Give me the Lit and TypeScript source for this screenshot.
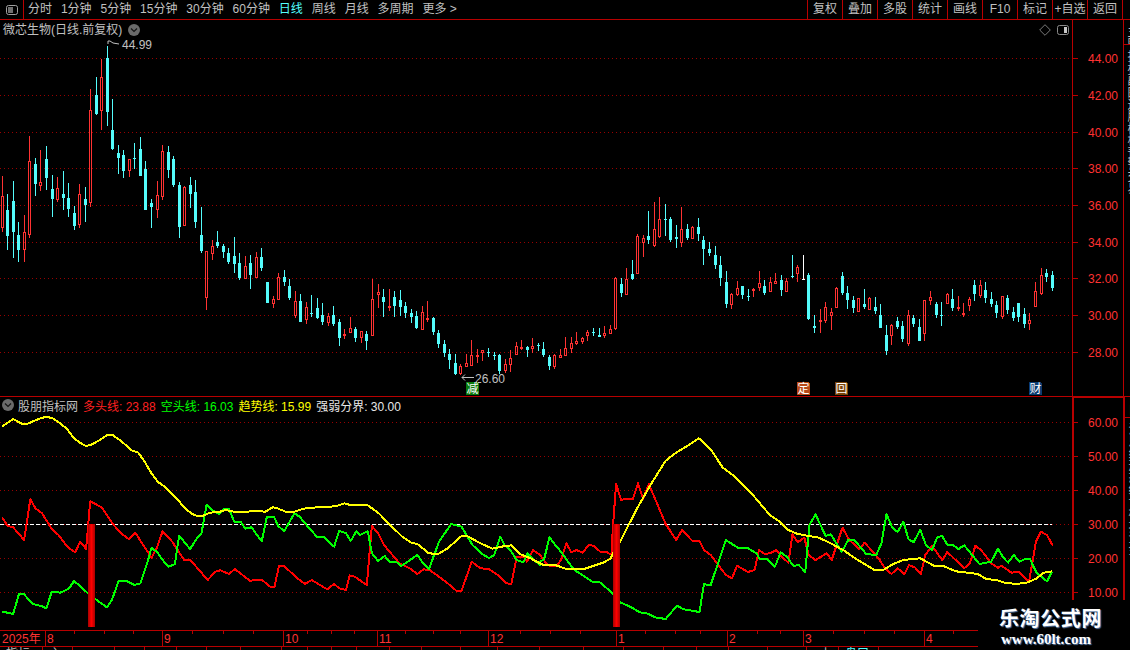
import { LitElement, css, html, svg } from 'lit';
import { customElement } from 'lit/decorators.js';

// hi, body top, body bottom, lo (page px), kind: 1 up, 0 down, 2 flat
type Candle = [number, number, number, number, number];

const CANDLES: Candle[] = [
  [176,196,228,232,1],[194,210,236,250,0],[181,201,232,258,0],[222,235,250,262,0],[215,232,250,262,1],
  [136,161,235,238,1],[158,164,184,196,0],[150,182,186,191,1],[146,159,178,190,0],[175,189,199,217,0],
  [177,188,200,202,1],[171,194,198,210,0],[183,198,209,217,0],[206,213,226,230,0],[184,194,225,228,1],
  [187,199,205,222,0],[89,110,203,207,1],[77,95,114,115,0],[59,77,111,130,1],[46,58,112,126,0],
  [99,130,149,150,0],[145,153,158,174,0],[150,155,171,178,0],[159,159,171,177,1],[143,158,159,169,0],
  [137,149,176,176,0],[161,169,210,210,0],[199,203,207,228,0],[181,195,210,218,1],[145,151,197,200,1],
  [146,152,170,178,0],[156,159,185,187,0],[182,185,227,238,0],[186,187,226,226,1],[177,185,194,208,0],
  [180,192,222,228,0],[207,235,251,253,0],[251,251,298,310,1],[240,246,254,260,1],[231,242,246,248,0],
  [244,246,252,258,0],[248,253,262,264,0],[237,256,264,273,0],[253,263,278,280,0],[256,266,279,279,1],
  [255,263,275,289,0],[252,257,278,278,1],[248,257,268,271,0],[282,282,303,303,0],[296,299,304,308,1],
  [273,277,300,300,1],[270,277,282,286,0],[279,286,298,300,0],[291,301,316,318,1],[294,301,322,322,0],
  [302,307,320,324,1],[295,313,314,317,0],[298,308,318,319,0],[303,315,322,325,0],[313,316,323,326,1],
  [306,315,324,326,0],[319,322,338,346,0],[329,334,336,339,1],[317,328,333,333,1],[327,329,338,342,0],
  [331,331,338,343,1],[331,334,341,350,0],[279,299,336,336,1],[284,292,295,308,1],[289,297,302,317,0],
  [289,306,307,311,1],[291,297,306,317,0],[290,300,307,316,0],[302,306,313,318,0],[309,313,317,323,0],
  [311,316,328,329,0],[306,312,330,330,1],[301,318,319,322,1],[317,318,332,335,0],[330,333,344,348,0],
  [340,344,353,357,0],[349,354,360,369,0],[354,363,374,375,0],[364,366,374,375,1],[354,363,367,367,1],
  [340,355,366,366,1],[349,355,356,363,1],[350,350,353,361,1],[348,352,353,357,0],[352,355,356,360,0],
  [354,355,371,374,0],[359,364,371,373,1],[350,358,365,372,1],[342,346,355,355,1],[340,347,349,350,1],
  [346,347,350,357,0],[338,346,349,353,1],[343,345,346,351,0],[342,349,355,357,0],[355,357,366,370,0],
  [354,355,367,369,1],[349,355,358,358,1],[337,348,356,356,1],[337,343,349,353,1],[332,341,344,345,1],
  [337,338,342,344,1],[330,332,336,341,1],[328,332,333,336,0],[328,335,337,337,0],[326,333,336,338,1],
  [325,329,334,334,1],[277,278,329,330,1],[278,284,293,297,0],[268,279,295,295,1],[260,274,279,280,0],
  [234,236,274,274,1],[235,238,243,257,1],[211,236,240,244,0],[202,229,246,247,1],[197,219,237,238,1],
  [204,219,220,236,0],[217,219,240,242,0],[225,237,239,248,0],[207,229,243,247,1],[224,229,238,240,0],
  [226,227,239,239,1],[218,227,234,241,0],[236,240,249,265,0],[242,249,253,256,0],[246,255,265,269,0],
  [256,265,278,286,0],[271,282,304,308,0],[293,294,305,309,1],[281,288,295,296,1],[286,286,295,299,0],
  [289,296,297,301,0],[288,289,290,297,1],[271,283,288,291,1],[280,286,293,295,0],[277,282,292,292,1],
  [273,281,284,284,1],[275,280,290,296,0],[278,281,292,292,1],[255,276,277,278,0],[265,267,274,282,1],
  [255,279,280,280,2],[273,275,319,320,0],[315,326,328,333,0],[309,320,321,333,1],[302,307,321,323,1],
  [308,312,316,330,1],[287,288,308,308,1],[272,276,293,295,0],[286,293,300,309,0],[296,300,308,313,0],
  [298,298,312,312,1],[289,304,307,309,0],[297,298,310,310,1],[297,307,311,314,0],[304,315,328,328,0],
  [325,335,351,355,0],[324,325,336,345,1],[317,321,327,329,0],[321,326,339,342,0],[310,315,344,346,1],
  [315,318,324,327,0],[319,327,341,341,0],[300,300,334,341,1],[291,297,301,305,1],[302,304,315,318,0],
  [302,315,316,326,0],[293,294,304,304,1],[289,299,308,311,0],[296,307,308,311,1],[303,313,315,317,1],
  [297,299,306,311,1],[280,285,294,301,0],[280,285,296,298,1],[282,290,298,303,0],[292,299,304,307,0],
  [301,305,313,318,0],[296,296,317,319,1],[295,298,310,314,0],[307,312,318,321,0],[303,303,317,322,0],
  [308,314,324,328,0],[313,320,324,330,1],[282,291,307,307,1],[268,275,294,295,1],[269,273,277,282,0],
  [271,275,288,291,0],
];

// traces read off the reference in crop coordinates, left half and right half
const LEFT = { x0: 0, scale: 540 / 1568 };
const RIGHT = { x0: 540, scale: 530 / 1568 };

const YELLOW_A = [6,80,22,68,38,57,52,65,66,72,80,71,100,62,120,54,136,50,155,56,175,70,195,88,215,115,235,130,250,138,265,134,290,120,310,106,328,106,345,118,365,135,380,150,402,158,420,185,440,220,458,245,478,260,510,292,535,322,555,340,572,348,590,347,610,338,635,336,655,330,680,335,720,335,740,332,770,335,792,322,805,325,830,335,855,335,880,326,920,322,975,319,1000,310,1020,316,1068,316,1100,340,1130,372,1170,412,1195,428,1212,432,1245,460,1272,462,1300,445,1340,408,1355,407,1395,430,1430,446,1455,440,1485,436,1510,462,1540,475,1568,490];
const YELLOW_B = [0,490,10,495,45,495,80,508,130,507,160,497,190,487,208,476,216,460,240,420,262,375,290,320,330,250,372,182,400,160,440,135,470,115,505,148,540,202,570,225,630,285,680,345,705,362,735,390,760,401,795,408,825,413,860,430,900,452,940,480,990,510,1015,510,1045,492,1075,480,1125,475,1165,497,1195,499,1230,514,1295,522,1320,537,1350,540,1375,548,1410,552,1440,548,1470,535,1490,518,1515,514];
const GREEN_A = [6,635,22,638,38,642,55,583,70,583,95,612,120,618,135,625,150,575,175,578,200,566,215,543,235,560,255,580,278,598,310,622,325,600,345,542,365,542,390,555,408,550,430,480,440,443,455,455,480,490,490,500,508,492,520,407,552,447,575,410,585,400,600,314,615,330,635,342,650,326,665,326,680,365,700,367,712,386,730,382,760,424,775,350,795,350,808,378,825,394,855,340,870,350,890,375,920,410,940,410,970,440,985,393,1005,400,1018,423,1035,394,1045,405,1068,394,1080,460,1098,483,1117,468,1130,485,1150,485,1165,498,1212,465,1225,485,1245,508,1275,425,1310,372,1340,380,1372,435,1400,462,1420,474,1435,465,1453,410,1465,435,1480,448,1500,480,1520,487,1532,460,1550,480,1568,495];
const GREEN_B = [0,485,12,478,28,412,45,435,62,455,90,495,105,512,155,545,175,545,215,580,240,608,270,622,295,637,320,641,340,652,372,657,405,617,425,628,472,636,485,553,505,555,530,480,550,420,585,443,615,445,640,460,650,476,670,476,695,500,712,457,730,470,750,498,765,495,785,516,797,375,815,343,845,408,860,403,893,455,912,420,930,420,965,462,995,465,1010,430,1025,342,1042,382,1058,396,1075,365,1090,417,1105,427,1125,390,1142,436,1160,450,1175,412,1190,408,1205,434,1220,434,1238,447,1255,436,1300,492,1335,485,1355,446,1370,472,1385,488,1402,465,1418,485,1438,476,1450,478,1470,520,1500,544,1515,514];
const RED_A = [6,352,22,378,38,382,70,420,88,298,103,325,122,340,150,386,170,405,195,440,218,457,233,425,250,447,262,304,295,322,330,375,355,403,375,418,393,398,420,442,440,473,455,445,472,394,500,425,535,480,553,480,603,540,625,515,640,511,665,522,682,507,725,542,760,539,785,560,797,560,810,498,825,498,860,532,885,552,905,540,950,568,970,552,985,565,1005,570,1015,526,1030,530,1065,555,1080,378,1098,400,1115,435,1160,490,1190,505,1212,522,1230,508,1248,510,1300,550,1325,572,1340,572,1370,485,1395,505,1420,507,1445,525,1470,550,1485,552,1500,472,1520,470,1530,485,1548,450,1568,465];
const RED_B = [0,465,18,490,28,498,50,498,62,480,78,430,92,457,108,450,125,458,145,435,160,438,178,455,195,455,212,465,215,390,225,253,240,299,275,296,290,250,305,297,322,252,372,372,403,420,420,390,450,422,472,423,485,450,505,465,550,525,568,535,583,497,615,516,635,510,648,450,665,462,680,460,700,450,715,470,735,488,747,403,762,427,782,413,795,465,815,480,848,460,863,480,895,383,915,420,945,447,960,428,985,455,1005,480,1020,505,1040,522,1058,505,1078,522,1092,495,1110,503,1127,522,1140,465,1160,438,1190,480,1205,456,1255,505,1272,490,1288,437,1305,450,1335,490,1355,503,1365,497,1395,518,1415,515,1447,545,1467,425,1482,395,1500,405,1517,437];

const trace = (a: number[], b: number[]) => {
  const pts: string[] = [];
  for (let i = 0; i < a.length; i += 2) {
    pts.push(`${(LEFT.x0 + a[i] * LEFT.scale).toFixed(1)},${(400 + a[i + 1] / 3).toFixed(1)}`);
  }
  for (let i = 0; i < b.length; i += 2) {
    pts.push(`${(RIGHT.x0 + b[i] * RIGHT.scale).toFixed(1)},${(400 + b[i + 1] / 3).toFixed(1)}`);
  }
  return pts.join(' ');
};

const MAIN_GRID = [
  [58, '44.00'], [95, '42.00'], [132, '40.00'], [168, '38.00'], [205, '36.00'],
  [242, '34.00'], [278, '32.00'], [315, '30.00'], [352, '28.00'],
] as const;
const SUB_GRID = [
  [422, '60.00'], [456, '50.00'], [490, '40.00'], [524, '30.00'], [558, '20.00'], [592, '10.00'],
] as const;

const PERIODS = ['分时', '1分钟', '5分钟', '15分钟', '30分钟', '60分钟', '日线', '周线', '月线', '多周期', '更多 >'];
const ACTIONS = ['复权', '叠加', '多股', '统计', '画线', 'F10', '标记', '+自选', '返回'];

const MONTHS = [
  [45, '8'], [162, '9'], [283, '10'], [377, '11'], [488, '12'],
  [616, '1'], [727, '2'], [803, '3'], [924, '4'],
] as const;
const MONTH_TICKS = [74, 104, 133, 192, 223, 253, 307, 331, 354, 405, 433, 460, 520, 550, 580, 645, 675, 700, 757, 780, 833, 864, 894, 953];

// width and text of the cells in the row cut off by the bottom edge
const STATUS_CELLS: [number, string, string?][] = [
  [43, '指标'], [30, '主'], [42, ''], [30, ''], [32, ''], [30, ''], [34, ''], [41, ''], [26, ''],
  [24, ''], [25, ''], [33, ''], [32, ''], [39, ''], [37, ''], [42, ''], [44, ''], [40, ''], [40, ''],
  [33, ''], [32, ''], [39, ''], [39, ''], [32, '上', 'end'], [40, '盘口', 'active'],
];

const badge = (x: number, fill: string, label: string) => svg`
  <path class="crisp" d="M${x} 382h11l2 2v11h-13z" fill=${fill}></path>
  <text class="badge-text" x=${x + 6.5} y="393">${label}</text>
`;

const panelRightIcon = () => html`
  <svg class="split-icon" viewBox="0 0 12 10" width="12" height="10">
    <rect x="0.5" y="0.5" width="11" height="9" rx="2" fill="none" stroke="#8a8a8a"></rect>
    <rect x="7" y="2" width="3" height="6" fill="#c8c8c8"></rect>
  </svg>
`;

const panelLeftIcon = () => html`
  <svg class="split-icon" viewBox="0 0 12 10" width="12" height="10">
    <rect x="0.5" y="0.5" width="11" height="9" rx="2" fill="none" stroke="#a0a0a0"></rect>
    <rect x="2" y="2" width="5" height="6" fill="#707070"></rect>
  </svg>
`;

const chevronIcon = () => html`
  <svg class="chevron" viewBox="0 0 12 12" width="12" height="12">
    <circle cx="6" cy="6" r="6" fill="#6a6a6a"></circle>
    <path d="M3 4.5l3 3 3-3" fill="none" stroke="#141414" stroke-width="1.2"></path>
  </svg>
`;

@customElement('app-root')
export class AppRoot extends LitElement {
  static styles = css`
    :host {
      display: block;
      position: relative;
      width: 1130px;
      height: 650px;
      overflow: hidden;
      background: #000;
      color: #c0c0c0;
      font-family: 'Liberation Sans', 'Noto Sans CJK SC', sans-serif;
      font-size: 12px;
    }

    .toolbar {
      display: flex;
      align-items: center;
      height: 20px;
      box-sizing: border-box;
      border-bottom: 1px solid #b80000;
      line-height: 19px;
    }

    .toolbar__toggle {
      display: flex;
      align-items: center;
      justify-content: center;
      width: 24px;
      height: 19px;
      box-sizing: border-box;
      border-right: 1px solid #b80000;
    }

    .periods {
      display: flex;
      gap: 8.9px;
      margin-left: 4px;
      white-space: nowrap;
    }

    .periods__item--active {
      color: #54ffff;
    }

    .actions {
      display: flex;
      margin-left: auto;
      margin-right: 7px;
    }

    .actions__item {
      width: 35px;
      height: 19px;
      box-sizing: border-box;
      border-left: 1px solid #b80000;
      text-align: center;
      white-space: nowrap;
    }

    .actions__item:last-child {
      width: 36px;
      border-right: 1px solid #b80000;
    }

    .panel {
      display: flex;
      position: relative;
      box-sizing: content-box;
    }

    .panel--main {
      height: 376px;
      border-bottom: 1px solid #b80000;
    }

    .panel--sub {
      height: 233px;
      border-bottom: 1px solid #b80000;
    }

    .panel svg.chart {
      display: block;
      flex: none;
    }

    .strip {
      width: 7px;
      box-sizing: border-box;
      border-left: 1px solid #b80000;
      overflow: hidden;
    }

    .panel--sub .strip {
      border-left-width: 2px;
    }

    .strip__cell {
      box-sizing: border-box;
      writing-mode: vertical-lr;
      padding: 5px 0 0 1px;
      line-height: 14px;
      border-bottom: 1px solid #b80000;
      white-space: nowrap;
      overflow: hidden;
    }

    .strip__cell--top {
      height: 25px;
    }

    .strip__cell--tall {
      height: 350px;
      border-bottom: none;
    }

    .strip__cell--active {
      height: 21px;
      padding-top: 7px;
      color: #e6e600;
    }

    .strip__cell--rest {
      height: 200px;
      border-bottom: none;
    }

    .title {
      position: absolute;
      left: 3px;
      top: 2px;
      display: flex;
      align-items: center;
      gap: 6px;
      line-height: 16px;
      white-space: nowrap;
    }

    .corner-tools {
      position: absolute;
      left: 1039px;
      top: 4px;
      display: flex;
      align-items: center;
      gap: 6px;
    }

    .split-icon,
    .chevron {
      display: block;
    }

    .legend {
      position: absolute;
      left: 2px;
      top: 0;
      display: flex;
      align-items: center;
      gap: 5px;
      height: 16px;
      white-space: nowrap;
    }

    .legend__name {
      margin: 0 0 0 -1px;
    }

    .legend__red {
      color: #ff2020;
    }

    .legend__green {
      color: #00ff00;
    }

    .legend__yellow {
      color: #ffff00;
    }

    .legend__white {
      color: #e8e8e8;
    }

    .crisp {
      shape-rendering: crispEdges;
    }

    .grid {
      stroke: #980000;
      stroke-width: 1;
      stroke-dasharray: 1 3;
      shape-rendering: crispEdges;
    }

    .axis-line {
      stroke: #b80000;
      shape-rendering: crispEdges;
    }

    .axis-label {
      fill: #ff3232;
      font-size: 12px;
      text-anchor: end;
    }

    .price-note {
      fill: #c0c0c0;
      font-size: 12px;
    }

    .badge-text {
      fill: #fff;
      font-size: 12px;
      text-anchor: middle;
    }

    .line {
      fill: none;
      stroke-width: 2;
      stroke-linejoin: round;
      shape-rendering: crispEdges;
    }

    .time-axis {
      position: relative;
      width: 978px;
      height: 15px;
      border-bottom: 1px solid #b80000;
      color: #ff3232;
      line-height: 16px;
    }

    .time-axis__year {
      position: absolute;
      left: 2px;
      top: 0;
    }

    .time-axis__month {
      position: absolute;
      top: 0;
      height: 15px;
      padding-left: 1px;
      border-left: 1px solid #b80000;
    }

    .time-axis__tick {
      position: absolute;
      top: 0;
      width: 1px;
      height: 3px;
      background: #b80000;
    }

    .status {
      display: flex;
      height: 3px;
      line-height: 14px;
      overflow: hidden;
    }

    .status__cell {
      flex: none;
      box-sizing: border-box;
      padding: 0 6px;
      border-right: 1px solid #b80000;
      white-space: nowrap;
    }

    .status__cell--end {
      text-align: right;
    }

    .status__cell--active {
      color: #54ffff;
    }

    .watermark {
      position: absolute;
      left: 978px;
      top: 600px;
      width: 152px;
      height: 50px;
      box-sizing: border-box;
      padding: 7px 0 0 21px;
      background: #000;
      color: #fff;
      white-space: nowrap;
    }

    .watermark__name {
      font-size: 20px;
      font-weight: 700;
      line-height: 24px;
      letter-spacing: 0.6px;
      text-shadow: 1px 1px 1px #5a7ca8;
    }

    .watermark__url {
      margin: 1px 0 0 2px;
      font-family: 'Liberation Serif', serif;
      font-size: 15px;
      font-weight: 700;
      line-height: 15px;
      text-shadow: 1px 1px 1px #5a7ca8;
    }
  `;

  private renderCandles() {
    return CANDLES.map(([hi, top, bottom, lo, kind], i) => {
      const x = Math.floor(2.3 + i * 5.525);
      if (kind === 1) {
        return svg`
          <rect x=${x} y=${hi} width="1" height=${Math.max(top - hi, 0)} fill="#ff3232"></rect>
          <rect x=${x} y=${bottom} width="1" height=${Math.max(lo - bottom, 0)} fill="#ff3232"></rect>
          <rect x=${x - 0.5} y=${top + 0.5} width="2" height=${Math.max(bottom - top - 1, 1)} fill="none" stroke="#ff3232"></rect>
        `;
      }
      const color = kind === 2 ? '#ffffff' : '#54fcfc';
      return svg`
        <rect x=${x} y=${hi} width="1" height=${lo - hi} fill=${color}></rect>
        <rect x=${x - 1} y=${top} width="3" height=${Math.max(bottom - top, 1)} fill=${color}></rect>
      `;
    });
  }

  private renderMain() {
    return html`
      <section class="panel panel--main">
        <svg class="chart" width="1123" height="376" viewBox="0 20 1123 376">
          ${MAIN_GRID.map(([y]) => svg`<line class="grid" x1="0" x2="1072" y1=${y + 0.5} y2=${y + 0.5}></line>`)}
          <g class="crisp">${this.renderCandles()}</g>
          <path d="M119 44l-6-1-3-2h-2v3" fill="none" stroke="#c0c0c0"></path>
          <text class="price-note" x="122" y="49">44.99</text>
          <path d="M474 377.5h-12m3-3l-3 3 3 3" fill="none" stroke="#c0c0c0"></path>
          <text class="price-note" x="475" y="383">26.60</text>
          ${badge(466, '#0a7a0a', '减')}
          ${badge(797, '#b84a18', '定')}
          ${badge(835, '#7a4408', '回')}
          ${badge(1029, '#0a3c70', '财')}
          <line class="axis-line" x1="1072.5" x2="1072.5" y1="20" y2="396"></line>
          ${MAIN_GRID.map(([y, label]) => svg`
            <line class="axis-line" x1="1072" x2="1078" y1=${y + 0.5} y2=${y + 0.5}></line>
            <text class="axis-label" x="1118" y=${y + 4.5}>${label}</text>
          `)}
        </svg>
        <div class="strip">
          <div class="strip__cell strip__cell--top">主图</div>
          <div class="strip__cell strip__cell--tall">指标副图选股模板预警交易</div>
        </div>
        <div class="title">
          <span>微芯生物(日线.前复权)</span>
          ${chevronIcon()}
        </div>
        <div class="corner-tools">
          <svg width="12" height="12" viewBox="0 0 12 12">
            <path d="M6 .7L11.3 6 6 11.3.7 6z" fill="none" stroke="#7a7a7a"></path>
          </svg>
          ${panelRightIcon()}
        </div>
      </section>
    `;
  }

  private renderSub() {
    return html`
      <section class="panel panel--sub">
        <svg class="chart" width="1123" height="233" viewBox="0 397 1123 233">
          <defs>
            <linearGradient id="signal" x1="0" x2="1" y1="0" y2="0">
              <stop offset="0" stop-color="#a80000"></stop>
              <stop offset="0.5" stop-color="#ff0000"></stop>
              <stop offset="1" stop-color="#a80000"></stop>
            </linearGradient>
          </defs>
          ${SUB_GRID.map(([y]) => svg`<line class="grid" x1="0" x2="1072" y1=${y + 0.5} y2=${y + 0.5}></line>`)}
          <line x1="0" x2="1052" y1="524.5" y2="524.5" stroke="#fff" stroke-dasharray="4 2" class="crisp"></line>
          <polyline class="line" stroke="#ff0000" points=${trace(RED_A, RED_B)}></polyline>
          <polyline class="line" stroke="#00ff00" points=${trace(GREEN_A, GREEN_B)}></polyline>
          <polyline class="line" stroke="#ffff00" points=${trace(YELLOW_A, YELLOW_B)}></polyline>
          <rect x="88" y="524" width="7" height="103" fill="url(#signal)"></rect>
          <rect x="613" y="524" width="7" height="103" fill="url(#signal)"></rect>
          <line class="axis-line" x1="1073" x2="1073" y1="397" y2="630" stroke-width="2"></line>
          <line class="axis-line" x1="1072" x2="1123" y1="397.5" y2="397.5"></line>
          ${SUB_GRID.map(([y, label]) => svg`
            <line class="axis-line" x1="1072" x2="1078" y1=${y + 0.5} y2=${y + 0.5}></line>
            <text class="axis-label" x="1118" y=${y + 4.5}>${label}</text>
          `)}
        </svg>
        <div class="strip">
          <div class="strip__cell strip__cell--active">目</div>
          <div class="strip__cell strip__cell--rest">江恩线形态统计板块资金</div>
        </div>
        <div class="legend">
          ${chevronIcon()}
          <span class="legend__name">股朋指标网</span>
          <span class="legend__red">多头线: 23.88</span>
          <span class="legend__green">空头线: 16.03</span>
          <span class="legend__yellow">趋势线: 15.99</span>
          <span class="legend__white">强弱分界: 30.00</span>
        </div>
      </section>
    `;
  }

  render() {
    return html`
      <header class="toolbar">
        <div class="toolbar__toggle">${panelLeftIcon()}</div>
        <nav class="periods">
          ${PERIODS.map(
            (p) => html`<span class=${p === '日线' ? 'periods__item--active' : ''}>${p}</span>`
          )}
        </nav>
        <nav class="actions">
          ${ACTIONS.map((a) => html`<div class="actions__item">${a}</div>`)}
        </nav>
      </header>
      ${this.renderMain()}
      ${this.renderSub()}
      <div class="time-axis">
        <span class="time-axis__year">2025年</span>
        ${MONTHS.map(
          ([x, label]) => html`<span class="time-axis__month" style="left:${x}px">${label}</span>`
        )}
        ${MONTH_TICKS.map((x) => html`<i class="time-axis__tick" style="left:${x}px"></i>`)}
      </div>
      <div class="status">
        ${STATUS_CELLS.map(
          ([w, text, mod]) => html`<div
            class="status__cell ${mod ? `status__cell--${mod}` : ''}"
            style="width:${w}px"
          >${text}</div>`
        )}
      </div>
      <div class="watermark">
        <div class="watermark__name">乐淘公式网</div>
        <div class="watermark__url">www.60lt.com</div>
      </div>
    `;
  }
}
